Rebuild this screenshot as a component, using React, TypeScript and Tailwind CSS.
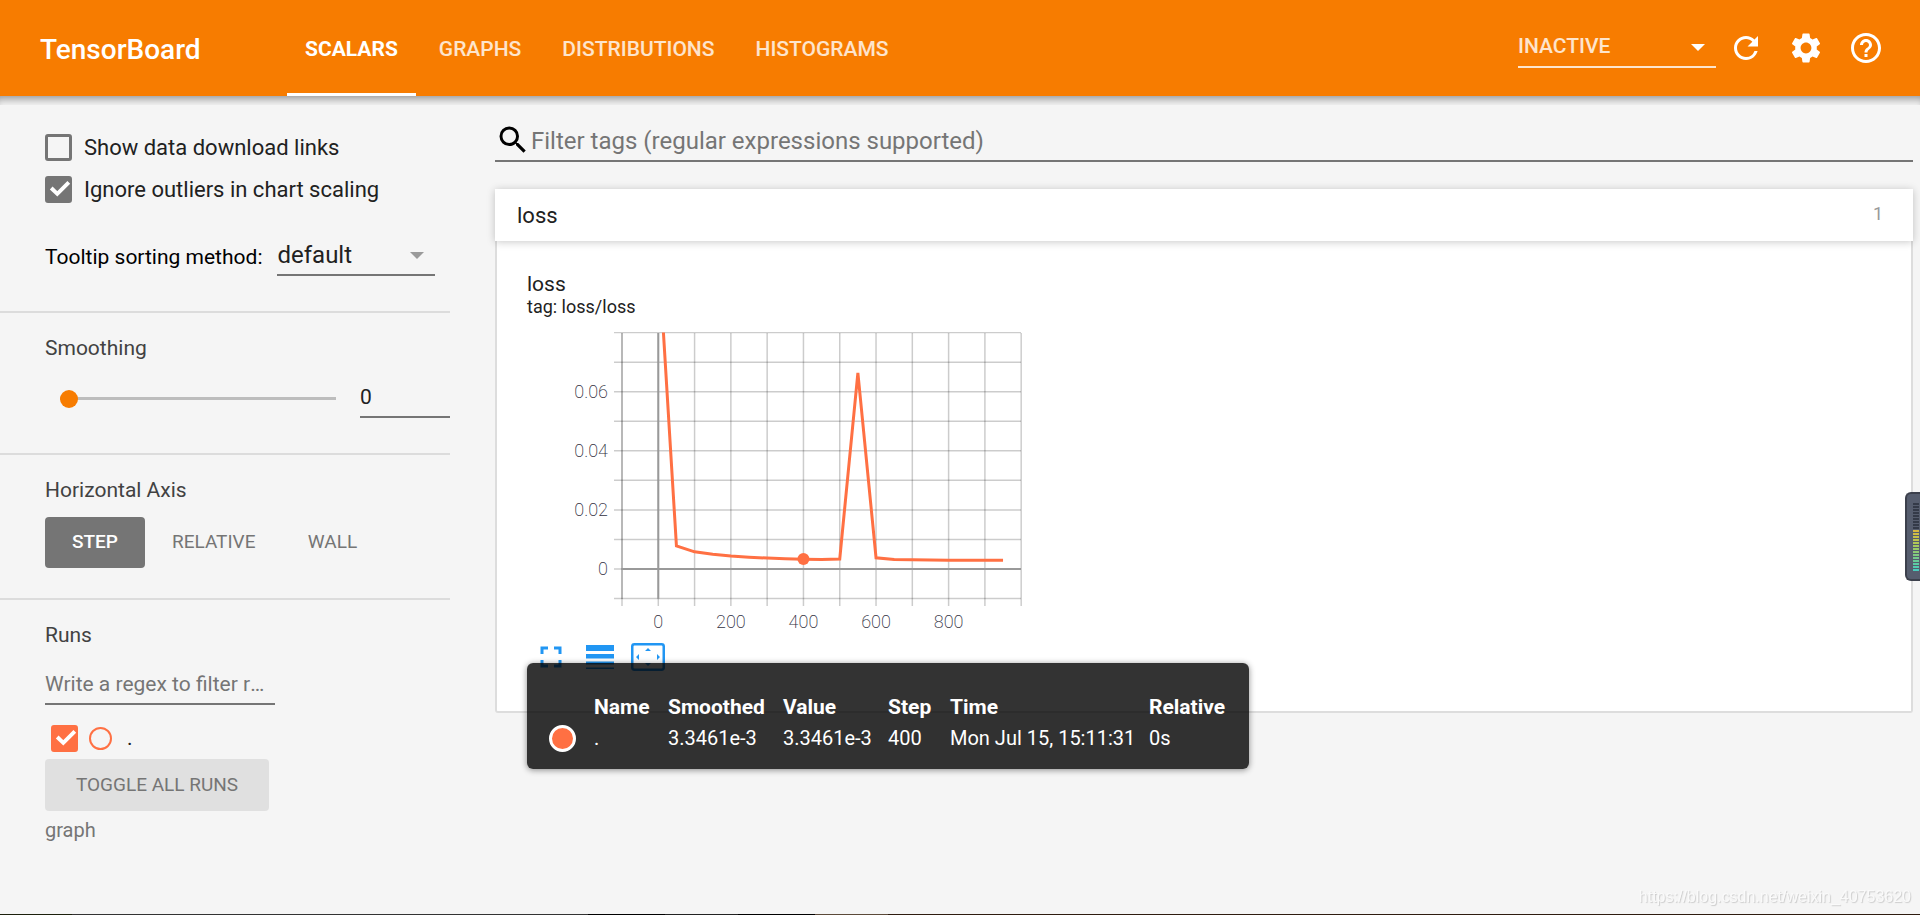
import { useState, type ReactNode } from "react";
import { MdFullscreen, MdHelpOutline, MdRefresh, MdSearch, MdSettings } from "react-icons/md";
import clsx from "clsx";

const TABS = ["SCALARS", "GRAPHS", "DISTRIBUTIONS", "HISTOGRAMS"];

function Arrow({ className }: { className: string }) {
  return (
    <svg viewBox="0 0 14 7" className={clsx("pointer-events-none absolute h-[7px] w-[14px]", className)} aria-hidden="true">
      <path d="M0 0h14L7 7z" fill="currentColor" />
    </svg>
  );
}

function Header() {
  const [tab, setTab] = useState("SCALARS");
  return (
    <header className="relative z-10 flex h-24 items-stretch bg-[#f77c00] text-white">
      <h1 className="flex w-[287px] shrink-0 items-center pl-10 pt-[3px] text-[28px] font-medium">TensorBoard</h1>
      <nav className="flex items-stretch">
        {TABS.map((t) => (
          <button
            key={t}
            type="button"
            onClick={() => setTab(t)}
            className={clsx(
              "mr-[5px] border-y-3 border-t-transparent px-[18px] pt-[3px] text-[21px]",
              t === tab ? "border-b-white font-bold text-white" : "border-b-transparent font-medium text-white/80",
            )}
          >
            {t}
          </button>
        ))}
      </nav>
      <div className="ml-auto flex items-center gap-6 pr-9">
        <div className="relative -mr-[12px] w-[198px]">
          <select aria-label="Plugin" className="block h-10 w-full appearance-none border-b-2 border-white/80 bg-transparent text-[21px] font-medium text-white/80 outline-none">
            <option>INACTIVE</option>
          </select>
          <Arrow className="right-[11px] top-4 text-white" />
        </div>
        <button type="button" aria-label="Reload"><MdRefresh size={36} /></button>
        <button type="button" aria-label="Settings"><MdSettings size={36} /></button>
        <a href="#help" aria-label="Help"><MdHelpOutline size={36} /></a>
      </div>
      <div className="absolute inset-x-0 top-full h-[9px] shadow-[inset_0_8px_9px_-5px_rgba(0,0,0,0.4)]" />
    </header>
  );
}

function Checkbox({ id, on, accent, label }: { id: string; on: boolean; accent: string; label?: string }) {
  return (
    <span className="grid h-[27px] w-[27px] shrink-0">
      <input
        id={id}
        type="checkbox"
        defaultChecked={on}
        aria-label={label}
        className={clsx("peer col-start-1 row-start-1 h-[27px] w-[27px] appearance-none rounded-[3px] border-3", accent)}
      />
      <svg viewBox="0 0 27 27" className="pointer-events-none invisible col-start-1 row-start-1 peer-checked:visible" aria-hidden="true">
        <path d="M6.200 12 12.300 17.800 23.800 6.300" fill="none" stroke="#fff" strokeWidth="3.900" />
      </svg>
    </span>
  );
}

function Section({ children, className }: { children: ReactNode; className?: string }) {
  return <section className={clsx("border-b-2 border-[#dcdcdc] pl-[45px]", className)}>{children}</section>;
}

function Heading({ children }: { children: ReactNode }) {
  return <h2 className="text-[21px] leading-[24px] text-[#424242]">{children}</h2>;
}

const AXES = ["STEP", "RELATIVE", "WALL"];

function Sidebar() {
  const [axis, setAxis] = useState("STEP");
  return (
    <aside className="w-[450px] shrink-0 text-[#212121]">
      <Section className="pb-[35px] pt-[38px]">
        <div className="flex flex-col gap-[15px] text-[22px] leading-[27px]">
          <label className="flex gap-3" htmlFor="links">
            <Checkbox id="links" on={false} accent="border-[#757575] checked:bg-[#757575]" />
            Show data download links
          </label>
          <label className="flex gap-3" htmlFor="outliers">
            <Checkbox id="outliers" on accent="border-[#757575] checked:bg-[#757575]" />
            Ignore outliers in chart scaling
          </label>
        </div>
        <div className="mt-[28px] flex items-center gap-[15px]">
          <label htmlFor="sorting" className="pt-2 text-[21px] text-black">Tooltip sorting method:</label>
          <div className="relative w-[158px]">
            <select id="sorting" className="block h-[45px] w-full appearance-none border-b-2 border-[#757575] bg-transparent pt-1 text-[24px] outline-none">
              <option>default</option>
            </select>
            <Arrow className="right-[11px] top-[21px] text-[#9a9a9a]" />
          </div>
        </div>
      </Section>
      <Section className="pb-[35px] pt-[23px]">
        <Heading>Smoothing</Heading>
        <div className="mt-[18px] flex items-center justify-between pl-[15px]">
          <input
            type="range"
            aria-label="Smoothing"
            min={0}
            max={1}
            step={0.001}
            defaultValue={0}
            className="h-[18px] w-[276px] appearance-none bg-transparent [&::-webkit-slider-runnable-track]:h-[3px] [&::-webkit-slider-runnable-track]:bg-[#bdbdbd] [&::-webkit-slider-thumb]:-mt-[7px] [&::-webkit-slider-thumb]:h-[18px] [&::-webkit-slider-thumb]:w-[18px] [&::-webkit-slider-thumb]:appearance-none [&::-webkit-slider-thumb]:rounded-full [&::-webkit-slider-thumb]:bg-[#f77c00]"
          />
          <input
            aria-label="Smoothing value"
            defaultValue="0"
            className="h-[40px] w-[90px] border-b-2 border-[#757575] bg-transparent text-[21px] outline-none"
          />
        </div>
      </Section>
      <Section className="pb-[30px] pt-[23px]">
        <Heading>Horizontal Axis</Heading>
        <div className="mt-[15px] flex gap-[6px]">
          {AXES.map((a) => (
            <button
              key={a}
              type="button"
              onClick={() => setAxis(a)}
              className={clsx(
                "h-[51px] min-w-[100px] rounded-[4px] px-[21px] text-[19px]",
                a === axis ? "bg-[#757575] font-medium text-white" : "text-[#757575]",
              )}
            >
              {a}
            </button>
          ))}
        </div>
      </Section>
      <section className="pl-[45px] pt-[23px]">
        <Heading>Runs</Heading>
        <input
          aria-label="Filter runs"
          placeholder="Write a regex to filter runs"
          className="mt-[17px] block h-[41px] w-[230px] text-ellipsis border-b-2 border-[#757575] bg-transparent pr-2 text-[21px] outline-none placeholder:text-[#757575]"
        />
        <div className="mt-5 flex items-center gap-[11px] pl-[6px]">
          <Checkbox id="run" on label="Show run" accent="border-[#ff7043] checked:bg-[#ff7043]" />
          <button type="button" aria-label="Only this run" className="h-[23px] w-[23px] rounded-full border-2 border-[#ff7043]" />
          <span className="ml-1 text-[21px] leading-[27px]">.</span>
        </div>
        <button type="button" className="mt-[7px] block h-[52px] w-[224px] rounded-[4px] bg-[#e0e0e0] text-[19px] text-[#757575]">
          TOGGLE ALL RUNS
        </button>
        <p className="mt-[7px] text-[20px] leading-[24px] text-[#757575]">graph</p>
      </section>
    </aside>
  );
}

const LOSS: [number, number][] = [
  [0, 0.1085], [50, 0.0078], [100, 0.0058], [150, 0.005], [200, 0.0044], [250, 0.004], [300, 0.0037], [350, 0.0035],
  [400, 0.0033], [450, 0.0032], [500, 0.0034], [550, 0.0664], [600, 0.0038], [650, 0.0032], [800, 0.003], [950, 0.003],
];
const px = (step: number) => 95 + (step + 100) * 0.3629;
const py = (value: number) => 237 - value * 2955;

function LossChart() {
  const columns = Array.from({ length: 12 }, (_, i) => -100 + i * 100);
  const rows = Array.from({ length: 10 }, (_, i) => -0.01 + i * 0.01);
  return (
    <svg viewBox="0 0 500 300" className="block h-[300px] w-[500px]" role="img" aria-label="loss/loss by step">
      <defs>
        <clipPath id="plot"><rect x="95" y="0.6" width="400" height="267" /></clipPath>
      </defs>
      <g stroke="#000" strokeOpacity="0.2" strokeWidth="1.5">
        {columns.map((c) => <path key={c} d={`M${px(c)} 1V274`} />)}
        {rows.map((r) => <path key={r} d={`M87 ${py(r)}H494`} />)}
        <path d={`M${px(-100)} 1V267`} />
      </g>
      <path d={`M${px(0)} 1V267M95 ${py(0)}H494`} stroke="#999" strokeWidth="2" />
      <path
        d={"M" + LOSS.map(([s, v]) => `${px(s)} ${py(v)}`).join("L")}
        fill="none"
        stroke="#ff7043"
        strokeWidth="3"
        clipPath="url(#plot)"
      />
      <circle cx={px(400)} cy={py(0.0033461)} r="6" fill="#ff7043" />
      <g className="text-[18px] font-extralight" fill="#32313f">
        {[0, 0.02, 0.04, 0.06].map((v) => <text key={v} x="81" y={py(v) + 6} textAnchor="end">{v}</text>)}
        {[0, 200, 400, 600, 800].map((s) => <text key={s} x={px(s)} y="296" textAnchor="middle">{s}</text>)}
      </g>
    </svg>
  );
}

function Tooltip() {
  return (
    <div className="absolute left-0 top-[24px] z-10 rounded-[6px] bg-black/80 pb-[15px] pl-[22px] pr-6 pt-[29px] shadow-[0_1px_6px_rgba(0,0,0,0.45)]">
      <table className="w-[676px] table-fixed whitespace-nowrap text-[20px] leading-[31px] text-white">
        <colgroup>
          <col className="w-[45px]" />
          <col className="w-[74px]" />
          <col className="w-[115px]" />
          <col className="w-[105px]" />
          <col className="w-[62px]" />
          <col className="w-[199px]" />
          <col className="w-[76px]" />
        </colgroup>
        <thead className="text-left text-[21px] leading-[31px]">
          <tr>
            <td />
            <th>Name</th>
            <th>Smoothed</th>
            <th>Value</th>
            <th>Step</th>
            <th>Time</th>
            <th>Relative</th>
          </tr>
        </thead>
        <tbody>
          <tr>
            <td><span className="block h-[27px] w-[27px] rounded-full border-3 border-white bg-[#ff7043]" /></td>
            <td>.</td>
            <td>3.3461e-3</td>
            <td>3.3461e-3</td>
            <td>400</td>
            <td>Mon Jul 15, 15:11:31</td>
            <td>0s</td>
          </tr>
        </tbody>
      </table>
    </div>
  );
}

function Main() {
  return (
    <main className="min-w-0 flex-1 pl-[45px] pr-[7px] pt-6">
      <label className="flex h-[42px] items-center border-b-2 border-[#757575]">
        <MdSearch size={36} className="shrink-0 text-black" aria-hidden="true" />
        <input
          aria-label="Filter tags"
          placeholder="Filter tags (regular expressions supported)"
          className="h-full min-w-0 flex-1 bg-transparent pt-[2px] text-[24px] outline-none placeholder:text-[#757575]"
        />
      </label>
      <div className="mt-[27px]">
        <button type="button" className="relative flex h-[52px] w-full items-center justify-between bg-white pl-[22px] pr-[30px] shadow-[0_1px_8px_rgba(0,0,0,0.22)]">
          <span className="text-[22px] text-[#212121]">loss</span>
          <span className="pb-1 text-[18px] text-[#999]">1</span>
        </button>
        <div className="rounded-b-[3px] border-2 border-t-0 border-[#ddd] bg-white pb-9 pl-[30px] pt-[31px]">
          <h3 className="text-[21px] leading-[24px] text-[#212121]">loss</h3>
          <p className="text-[18px] leading-[22px] text-[#212121]">tag: loss/loss</p>
          <div className="mt-[14px]"><LossChart /></div>
          <div className="relative mt-[7px] flex items-center gap-[17px] pl-[6px] text-[#2196f3]">
            <button type="button" aria-label="Expand chart"><MdFullscreen size={36} /></button>
            <button type="button" aria-label="Toggle log scale">
              <svg viewBox="0 0 28 24" className="block h-6 w-7">
                <path d="M0 0h28v6H0zM0 9h28v4.500H0zM0 16.500h28v3H0zM0 22.500h28V24H0z" fill="currentColor" />
              </svg>
            </button>
            <button type="button" aria-label="Fit domain to data">
              <svg viewBox="0 0 34 28" className="block h-7 w-[34px]">
                <rect x="1.250" y="1.250" width="31.500" height="25.500" rx="2.200" fill="none" stroke="currentColor" strokeWidth="2.500" />
                <path d="M17 5l3 3h-6zM17 23l3-3h-6zM5 14l3-3v6zM29 14l-3-3v6z" fill="currentColor" />
              </svg>
            </button>
            <Tooltip />
          </div>
        </div>
      </div>
    </main>
  );
}

const METER = [
  ...Array.from({ length: 9 }, () => "#343a48"),
  "#d6b840", "#d0bc44", "#c6c048", "#bcc44e", "#b0c856", "#a4ca5e", "#98cc68", "#8ccc74",
  "#80cc80", "#74cc8c", "#68cc98", "#5ccca4", "#52ccb0", "#4accbc",
];

function LevelMeter() {
  return (
    <div className="fixed right-0 top-[492px] z-20 flex h-[89px] w-[15px] flex-col items-center justify-center gap-[1px] rounded-l-[6px] border-2 border-r-0 border-[#3c404c] bg-[#565d6e] pl-1">
      {METER.map((color, i) => <span key={i} className="h-[2px] w-[6px] shrink-0" style={{ backgroundColor: color }} />)}
    </div>
  );
}

export default function App() {
  return (
    <div className="flex min-h-screen flex-col bg-[#f5f5f5] font-['Roboto',sans-serif]">
      <Header />
      <div className="flex flex-1">
        <Sidebar />
        <Main />
      </div>
      <div className="flex h-px">
        <div className="w-[72px] bg-[#1c200c]" />
        <div className="w-[516px] bg-[#333]" />
        <div className="w-[77px] bg-black" />
        <div className="w-[73px] bg-[#222]" />
        <div className="w-[77px] bg-black" />
        <div className="w-[73px] bg-[#5c4a3a]" />
        <div className="flex-1 bg-[#2e1c10]" />
      </div>
      <LevelMeter />
      <p className="fixed bottom-2 right-[9px] font-['Liberation_Sans',sans-serif] text-[16px] leading-[20px] text-[#fafafa] [text-shadow:1px_1px_1px_#cccccc]">
        https://blog.csdn.net/weixin_40753620
      </p>
    </div>
  );
}
